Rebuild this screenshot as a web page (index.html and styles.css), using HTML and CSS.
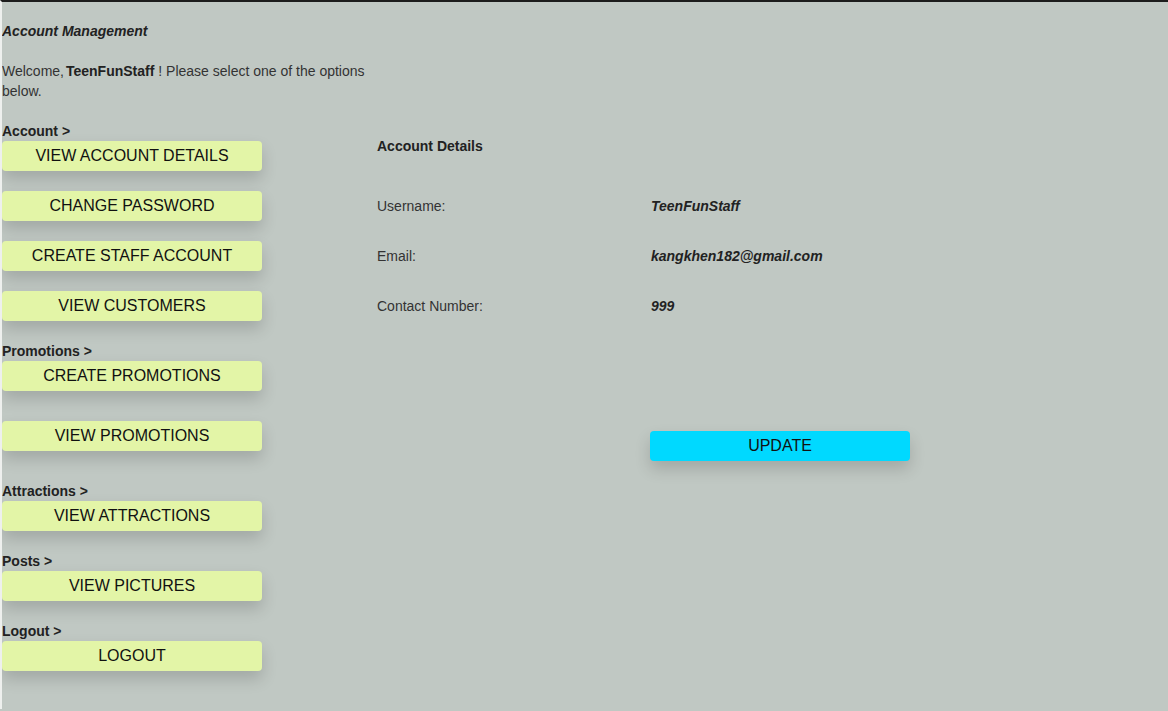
FILE: index.html
```html
<!DOCTYPE html>
<html>
<head>
<meta charset="utf-8">
<link rel="stylesheet" href="styles.css">
</head>
<body>
<div class="page">
  <aside class="side">
    <p class="title">Account Management</p>
    <p class="welcome">Welcome,<b>TeenFunStaff</b> ! Please select one of the options below.</p>
    <p class="section">Account &gt;</p>
    <button class="btn">VIEW ACCOUNT DETAILS</button>
    <button class="btn">CHANGE PASSWORD</button>
    <button class="btn">CREATE STAFF ACCOUNT</button>
    <button class="btn">VIEW CUSTOMERS</button>
    <p class="section">Promotions &gt;</p>
    <button class="btn btn-wide">CREATE PROMOTIONS</button>
    <button class="btn btn-wide">VIEW PROMOTIONS</button>
    <p class="section">Attractions &gt;</p>
    <button class="btn">VIEW ATTRACTIONS</button>
    <p class="section">Posts &gt;</p>
    <button class="btn">VIEW PICTURES</button>
    <p class="section">Logout &gt;</p>
    <button class="btn">LOGOUT</button>
  </aside>
  <main class="main">
    <p class="heading">Account Details</p>
    <div class="details">
      <span class="label">Username:</span><span class="value">TeenFunStaff</span>
      <span class="label">Email:</span><span class="value">kangkhen182@gmail.com</span>
      <span class="label">Contact Number:</span><span class="value">999</span>
    </div>
    <div class="actions">
      <button class="btn btn-update">UPDATE</button>
    </div>
  </main>
</div>
</body>
</html>
```
FILE: styles.css
```css
html, body {
  margin: 0;
  padding: 0;
}
body {
  background: #c0c8c3;
  border-top: 2px solid #1c1c1c;
  border-left: 2px solid #eef0ee;
  min-height: 709px;
  box-sizing: border-box;
  font-family: "Liberation Sans", Arial, sans-serif;
  font-size: 14px;
  line-height: 20px;
  color: #222;
}
p {
  margin: 0;
}
.page {
  display: flex;
}
.side {
  width: 373px;
  padding-top: 19px;
  display: flex;
  flex-direction: column;
  align-items: flex-start;
}
.title {
  font-weight: bold;
  font-style: italic;
  margin-bottom: 20px;
}
.welcome {
  color: #333;
  margin-bottom: 20px;
}
.welcome b {
  color: #222;
  margin-left: 2px;
}
.section {
  font-weight: bold;
}
.btn {
  width: 260px;
  height: 30px;
  border: none;
  border-radius: 4px;
  background: #e3f5a7;
  color: #111;
  font-family: "Liberation Sans", Arial, sans-serif;
  font-size: 16px;
  padding: 0;
  margin: 0 0 20px 0;
  box-shadow: 0 8px 16px 0 rgba(0, 0, 0, 0.16);
  cursor: pointer;
}
.btn-wide {
  margin-bottom: 30px;
}
.main {
  padding-top: 134px;
  padding-left: 2px;
}
.heading {
  font-weight: bold;
  margin-bottom: 40px;
}
.details {
  display: grid;
  grid-template-columns: 274px auto;
  row-gap: 30px;
  color: #333;
}
.value {
  font-weight: bold;
  font-style: italic;
  color: #222;
}
.actions {
  margin-top: 115px;
  padding-left: 273px;
}
.btn-update {
  background: #00d9ff;
}
```
